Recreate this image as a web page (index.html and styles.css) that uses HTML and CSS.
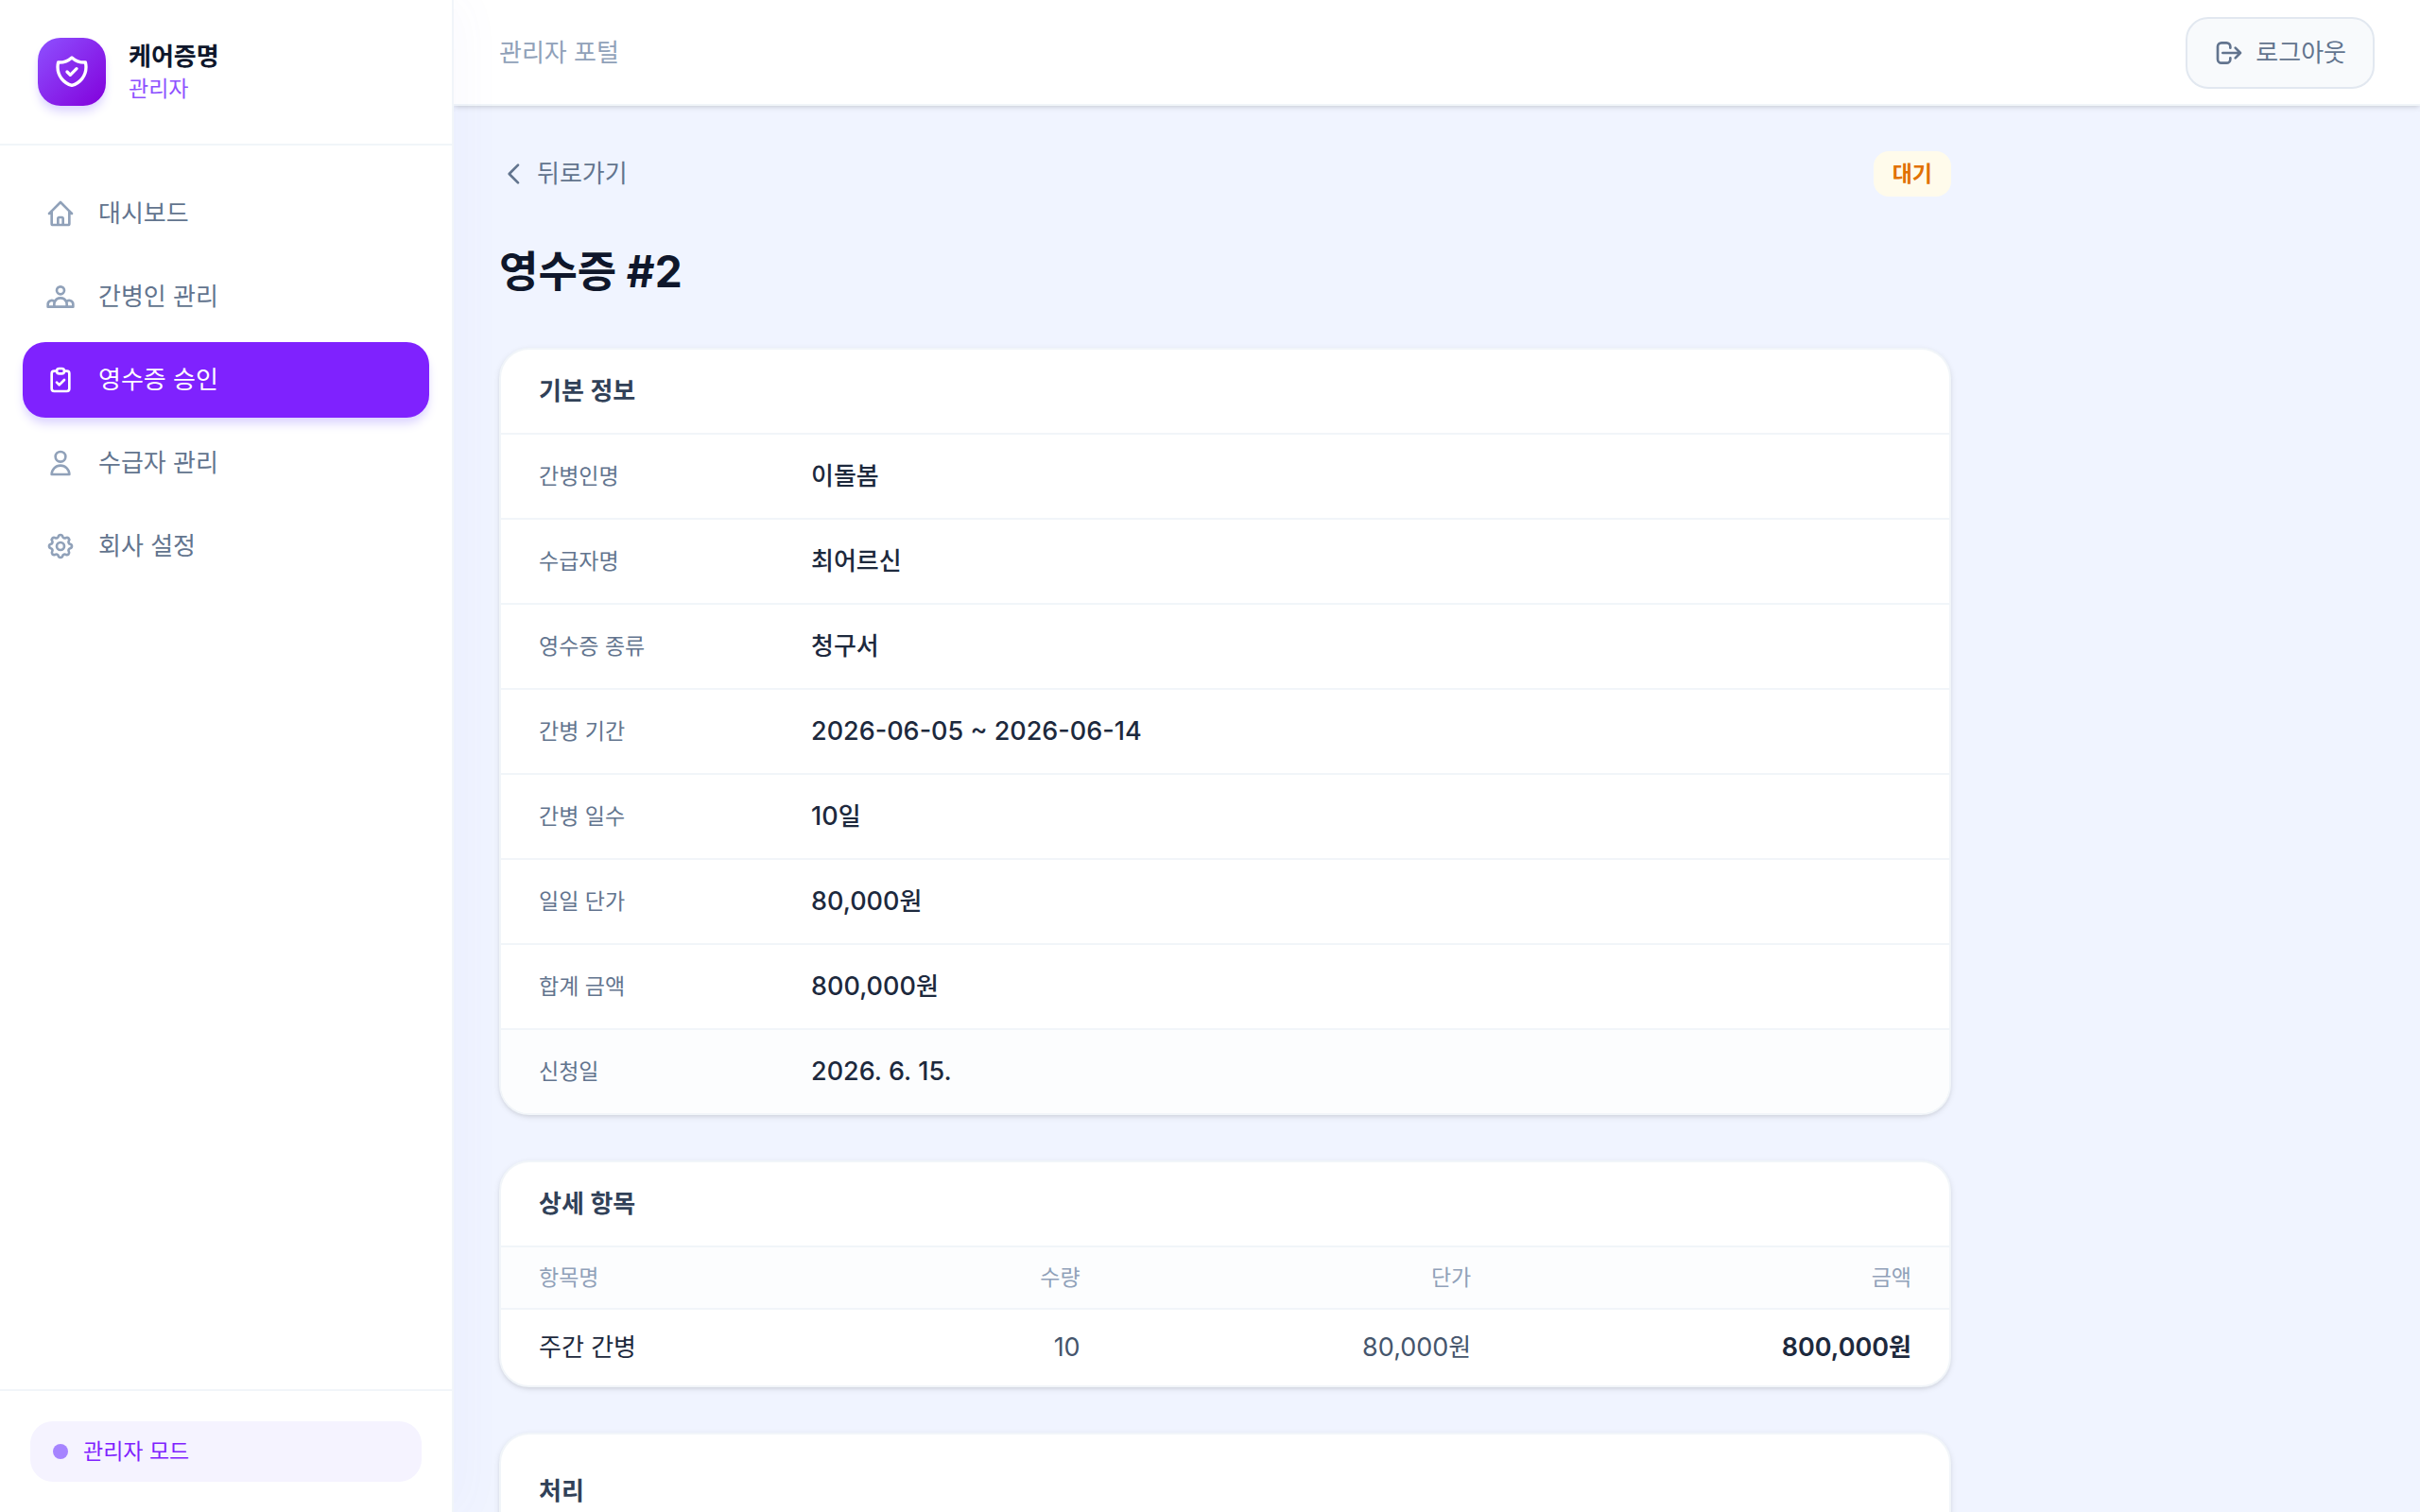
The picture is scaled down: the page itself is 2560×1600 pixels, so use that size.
FILE: index.html
```
<!doctype html>
<html lang="ko">
<head>
<meta charset="UTF-8">
<meta name="viewport" content="width=device-width, initial-scale=1">
<title>케어증명 | 영수증 #2</title>
<link rel="stylesheet" href="styles.css">
</head>

<body>
<div class="layout">

  <aside class="sidebar">
    <div class="brand">
      <div class="brand-logo">
        <svg viewBox="0 0 24 24"><path d="M9 12l2 2 4-4m5.618-4.016A11.955 11.955 0 0 1 12 2.944a11.955 11.955 0 0 1-8.618 3.040A12.020 12.020 0 0 0 3 9c0 5.591 3.824 10.290 9 11.622 5.176-1.332 9-6.030 9-11.622 0-1.042-.133-2.052-.382-3.016z"/></svg>
      </div>
      <div>
        <p class="brand-name">케어증명</p>
        <p class="brand-role">관리자</p>
      </div>
    </div>

    <nav class="nav">
      <a href="#" class="nav-item">
        <svg viewBox="0 0 24 24"><path d="M3 12l2-2m0 0l7-7 7 7M5 10v10a1 1 0 0 0 1 1h3m10-11l2 2m-2-2v10a1 1 0 0 1-1 1h-3m-6 0a1 1 0 0 0 1-1v-4a1 1 0 0 1 1-1h2a1 1 0 0 1 1 1v4a1 1 0 0 0 1 1m-6 0h6"/></svg>
        대시보드
      </a>
      <a href="#" class="nav-item">
        <svg viewBox="0 0 24 24"><path d="M17 20h5v-2a3 3 0 0 0-5.356-1.857M17 20H7m10 0v-2c0-.656-.126-1.283-.356-1.857M7 20H2v-2a3 3 0 0 1 5.356-1.857M7 20v-2c0-.656.126-1.283.356-1.857m0 0a5.002 5.002 0 0 1 9.288 0M15 7a3 3 0 1 1-6 0 3 3 0 0 1 6 0z"/></svg>
        간병인 관리
      </a>
      <a href="#" class="nav-item active">
        <svg viewBox="0 0 24 24"><path d="M9 5H7a2 2 0 0 0-2 2v12a2 2 0 0 0 2 2h10a2 2 0 0 0 2-2V7a2 2 0 0 0-2-2h-2M9 5a2 2 0 0 0 2 2h2a2 2 0 0 0 2-2M9 5a2 2 0 0 1 2-2h2a2 2 0 0 1 2 2m-6 9l2 2 4-4"/></svg>
        영수증 승인
      </a>
      <a href="#" class="nav-item">
        <svg viewBox="0 0 24 24"><path d="M16 7a4 4 0 1 1-8 0 4 4 0 0 1 8 0zM12 14a7 7 0 0 0-7 7h14a7 7 0 0 0-7-7z"/></svg>
        수급자 관리
      </a>
      <a href="#" class="nav-item">
        <svg viewBox="0 0 24 24"><path d="M10.325 4.317c.426-1.756 2.924-1.756 3.350 0a1.724 1.724 0 0 0 2.573 1.066c1.543-.94 3.310.826 2.370 2.370a1.724 1.724 0 0 0 1.065 2.572c1.756.426 1.756 2.924 0 3.350a1.724 1.724 0 0 0-1.066 2.573c.94 1.543-.826 3.310-2.370 2.370a1.724 1.724 0 0 0-2.572 1.065c-.426 1.756-2.924 1.756-3.350 0a1.724 1.724 0 0 0-2.573-1.066c-1.543.94-3.310-.826-2.370-2.370a1.724 1.724 0 0 0-1.065-2.572c-1.756-.426-1.756-2.924 0-3.350a1.724 1.724 0 0 0 1.066-2.573c-.94-1.543.826-3.310 2.370-2.370.996.608 2.296.07 2.572-1.065z"/><path d="M15 12a3 3 0 1 1-6 0 3 3 0 0 1 6 0z"/></svg>
        회사 설정
      </a>
    </nav>

    <div class="sidebar-footer">
      <div class="mode"><span class="mode-dot"></span>관리자 모드</div>
    </div>
  </aside>

  <div class="page">
    <header class="topbar">
      <span class="topbar-title">관리자 포털</span>
      <button type="button" class="logout">
        <svg viewBox="0 0 24 24"><path d="M17 16l4-4m0 0l-4-4m4 4H7m6 4v1a3 3 0 0 1-3 3H6a3 3 0 0 1-3-3V7a3 3 0 0 1 3-3h4a3 3 0 0 1 3 3v1"/></svg>
        로그아웃
      </button>
    </header>

    <main class="content">
      <div class="content-top">
        <a href="#" class="back">
          <svg viewBox="0 0 24 24"><path d="M15 19l-7-7 7-7"/></svg>
          뒤로가기
        </a>
        <span class="badge">대기</span>
      </div>

      <h1>영수증 <span class="num">#2</span></h1>

      <section class="card">
        <h2>기본 정보</h2>
        <dl class="info">
          <div class="info-row"><dt>간병인명</dt><dd>이돌봄</dd></div>
          <div class="info-row"><dt>수급자명</dt><dd>최어르신</dd></div>
          <div class="info-row"><dt>영수증 종류</dt><dd>청구서</dd></div>
          <div class="info-row"><dt>간병 기간</dt><dd><span class="num">2026-06-05 ~ 2026-06-14</span></dd></div>
          <div class="info-row"><dt>간병 일수</dt><dd><span class="num">10</span>일</dd></div>
          <div class="info-row"><dt>일일 단가</dt><dd><span class="num">80,000</span>원</dd></div>
          <div class="info-row"><dt>합계 금액</dt><dd><span class="num">800,000</span>원</dd></div>
          <div class="info-row muted"><dt>신청일</dt><dd><span class="num">2026. 6. 15.</span></dd></div>
        </dl>
      </section>

      <section class="card">
        <h2>상세 항목</h2>
        <table class="items">
          <thead>
            <tr>
              <th class="col-name">항목명</th>
              <th class="col-qty">수량</th>
              <th class="col-price">단가</th>
              <th class="col-total">금액</th>
            </tr>
          </thead>
          <tbody>
            <tr>
              <td class="col-name">주간 간병</td>
              <td class="col-qty"><span class="num">10</span></td>
              <td class="col-price"><span class="num">80,000</span>원</td>
              <td class="col-total"><span class="num">800,000</span>원</td>
            </tr>
          </tbody>
        </table>
      </section>

      <section class="card card-action">
        <h2>처리</h2>
      </section>
    </main>
  </div>

</div>
</body>
</html>
```
FILE: styles.css
```
* {
	box-sizing: border-box;
	margin: 0;
	padding: 0;
}
body {
	background-color: #f0f4ff;
	color: #1e293b;
	font-family: Inter, "Noto Sans CJK KR", sans-serif;
	font-size: 26px;
	line-height: 40px;
}
a {
	color: inherit;
	text-decoration: none;
}
svg {
	display: block;
	flex: none;
	width: 32px;
	height: 32px;
	fill: none;
	stroke: currentColor;
	stroke-width: 2;
	stroke-linecap: round;
	stroke-linejoin: round;
}

/* latin glyphs run smaller than hangul */
.num {
	font-size: 27px;
	line-height: 1;
}

.layout {
	display: flex;
	height: 100vh;
	overflow: hidden;
}

/* sidebar */
.sidebar {
	display: flex;
	flex-direction: column;
	flex: none;
	width: 480px;
	background: white;
	border-right: 2px solid #f1f5f9;
	box-shadow: 8px 0 48px rgba(99, 102, 241, 0.04);
	z-index: 1;
}
.brand {
	display: flex;
	align-items: center;
	gap: 24px;
	padding: 40px;
	border-bottom: 2px solid #f1f5f9;
}
.brand-logo {
	display: flex;
	align-items: center;
	justify-content: center;
	width: 72px;
	height: 72px;
	border-radius: 24px;
	color: white;
	background: linear-gradient(135deg, #8e51ff, #8200db);
	box-shadow: 0 8px 12px -2px #ddd6ff, 0 4px 8px -4px #ddd6ff;
}
.brand-logo svg {
	width: 40px;
	height: 40px;
}
.brand-name {
	font-weight: 700;
	line-height: 36px;
	color: #0f172b;
}
.brand-role {
	font-size: 23px;
	line-height: 32px;
	color: #8e51ff;
}
.nav {
	display: flex;
	flex-direction: column;
	flex: 1;
	gap: 8px;
	padding: 32px 24px;
}
.nav-item {
	display: flex;
	align-items: center;
	gap: 24px;
	height: 80px;
	padding: 0 24px;
	border-radius: 24px;
	color: #62748e;
}
.nav-item svg {
	color: #90a1b9;
}
.nav-item.active {
	background: #7f22fe;
	color: white;
	box-shadow: 0 8px 12px -2px #ddd6ff, 0 4px 8px -4px #ddd6ff;
}
.nav-item.active svg {
	color: white;
}
.sidebar-footer {
	padding: 32px;
	border-top: 2px solid #f1f5f9;
}
.mode {
	display: flex;
	align-items: center;
	gap: 16px;
	padding: 16px 24px;
	border-radius: 24px;
	background: #f5f3ff;
	font-size: 23px;
	line-height: 32px;
	color: #7f22fe;
}
.mode-dot {
	width: 16px;
	height: 16px;
	border-radius: 50%;
	background: #a684ff;
}

/* top bar */
.page {
	flex: 1;
	min-width: 0;
}
.topbar {
	display: flex;
	align-items: center;
	justify-content: space-between;
	height: 112px;
	padding: 2px 48px 0;
	background: white;
	border-bottom: 2px solid #f1f5f9;
	box-shadow: 0 2px 6px rgba(0, 0, 0, 0.1), 0 2px 4px -2px rgba(0, 0, 0, 0.1);
}
.topbar-title {
	color: #90a1b9;
}
.logout {
	display: flex;
	align-items: center;
	gap: 12px;
	padding: 16px 28px;
	border: 2px solid #e2e8f0;
	border-radius: 24px;
	background: #f8fafc;
	color: #62748e;
	font: inherit;
	cursor: pointer;
}

/* content */
.content {
	display: flex;
	flex-direction: column;
	gap: 48px;
	max-width: 1632px;
	padding: 48px;
}
.content-top {
	display: flex;
	align-items: center;
	justify-content: space-between;
}
.back {
	display: flex;
	align-items: center;
	gap: 8px;
	color: #62748e;
}
.badge {
	padding: 8px 20px;
	border-radius: 16px;
	background: #fffbeb;
	color: #e17100;
	font-size: 23px;
	font-weight: 600;
	line-height: 32px;
}
h1 {
	font-size: 45px;
	font-weight: 700;
	line-height: 64px;
	color: #0f172b;
}
h1 .num {
	font-size: 46px;
}

.card {
	overflow: hidden;
	border: 2px solid #f1f5f9;
	border-radius: 32px;
	background: white;
	box-shadow: 0 2px 6px rgba(0, 0, 0, 0.1), 0 2px 4px -2px rgba(0, 0, 0, 0.1);
}
.card h2 {
	padding: 24px 40px;
	font-size: 26px;
	font-weight: 600;
	color: #314158;
}
.card-action h2 {
	padding: 40px;
}
.info-row {
	display: flex;
	align-items: center;
	height: 90px;
	padding: 0 40px;
	border-top: 2px solid #f1f5f9;
}
.info-row.muted {
	background: #fcfdfe;
}
.info-row dt {
	width: 288px;
	font-size: 23px;
	color: #62748e;
}
.info-row dd {
	font-weight: 500;
	color: #1d293d;
}

.items {
	width: 100%;
	border-collapse: separate;
	border-spacing: 0;
	table-layout: fixed;
}
.items th,
.items td {
	padding: 0 40px;
	border-top: 2px solid #f1f5f9;
	text-align: right;
}
.items th {
	height: 66px;
	background: #fcfdfe;
	font-size: 23px;
	font-weight: 400;
	color: #90a1b9;
}
.items td {
	height: 82px;
	color: #45556c;
}
.items .col-name {
	text-align: left;
}
.items .col-qty {
	width: 20%;
}
.items .col-price {
	width: 27%;
}
.items .col-total {
	width: 30.4%;
}
.items td.col-name {
	color: #1d293d;
}
.items td.col-total {
	font-weight: 600;
	color: #1d293d;
}
```
